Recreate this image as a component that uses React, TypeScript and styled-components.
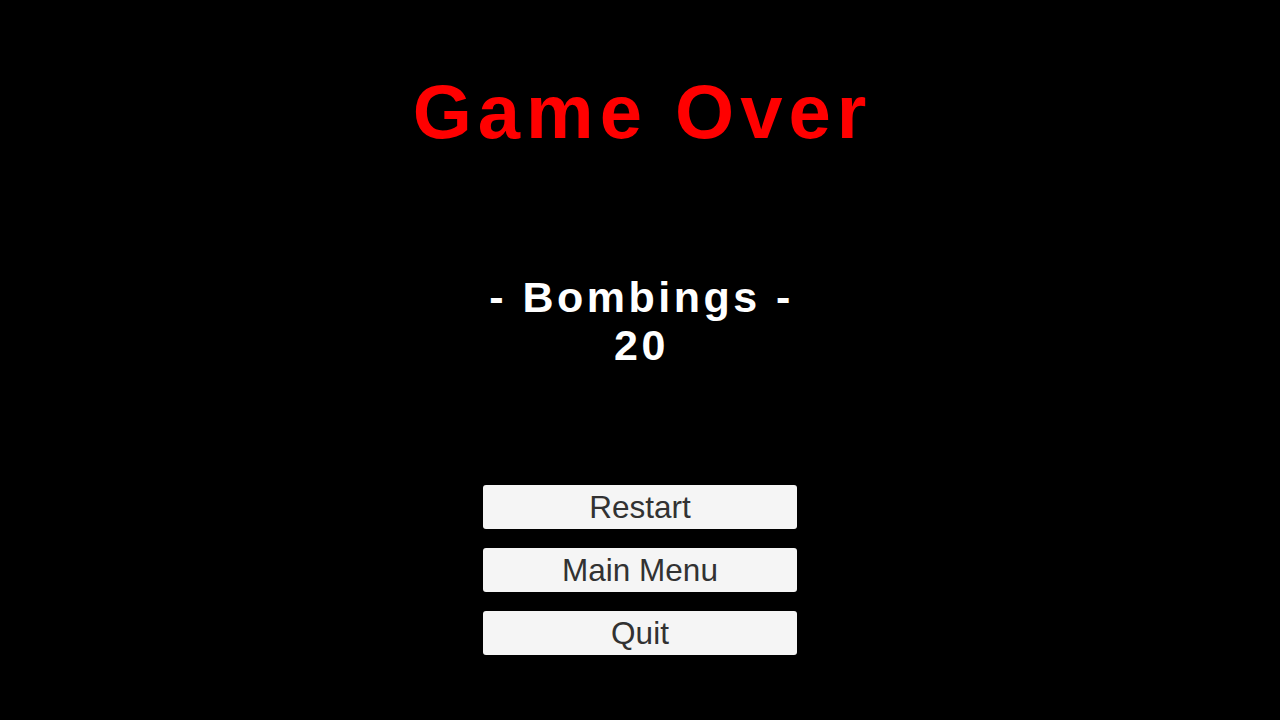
import styled, { createGlobalStyle } from "styled-components";

const GlobalStyle = createGlobalStyle`
  html, body {
    margin: 0;
    padding: 0;
    background: #000;
  }
  body {
    font-family: "Liberation Sans", Arial, sans-serif;
  }
`;

const Screen = styled.div`
  width: 100%;
  height: 100vh;
  background: #000;
  display: flex;
  flex-direction: column;
  align-items: center;
  padding-top: 67px;
  box-sizing: border-box;
`;

const Title = styled.h1`
  margin: 0;
  color: #ff0000;
  font-size: 76px;
  font-weight: 700;
  line-height: 90px;
  letter-spacing: 6px;
  padding-left: 5px;
`;

const Score = styled.div`
  margin-top: 116px;
  color: #fff;
  font-size: 43px;
  font-weight: 700;
  line-height: 48px;
  letter-spacing: 3.5px;
  padding-left: 3px;
  text-align: center;
`;

const Menu = styled.div`
  margin-top: 116px;
  display: flex;
  flex-direction: column;
  gap: 19px;
`;

const MenuButton = styled.button`
  width: 314px;
  height: 44px;
  border: none;
  border-radius: 3px;
  background: #f5f5f5;
  color: #323232;
  font-family: "Liberation Sans", Arial, sans-serif;
  font-size: 31.5px;
  padding: 0;
  cursor: pointer;
`;

const buttons = ["Restart", "Main Menu", "Quit"];

export default function App() {
  return (
    <>
      <GlobalStyle />
      <Screen>
        <Title>Game Over</Title>
        <Score>
          - Bombings -
          <br />
          20
        </Score>
        <Menu>
          {buttons.map((label) => (
            <MenuButton key={label}>{label}</MenuButton>
          ))}
        </Menu>
      </Screen>
    </>
  );
}
